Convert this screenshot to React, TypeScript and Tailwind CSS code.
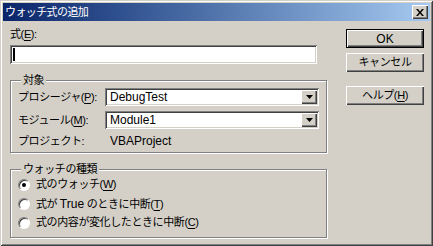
import React from "react";

const raised =
  "bg-[#d4d0c8] shadow-[inset_1px_1px_#fff,inset_-1px_-1px_#404040,inset_-2px_-2px_#808080]";
const sunken =
  "bg-white shadow-[inset_1px_1px_#808080,inset_-1px_-1px_#fff,inset_2px_2px_#404040,inset_-2px_-2px_#d4d0c8]";
const etched =
  "border border-[#808080] shadow-[inset_1px_1px_#fff,1px_1px_#fff]";

const Key = ({ k }: { k: string }) => (
  <>
    (<span className="underline underline-offset-2">{k}</span>)
  </>
);

const Latin = ({ children }: { children: React.ReactNode }) => (
  <span className="text-[12px] tracking-normal">{children}</span>
);

const Arrow = () => (
  <svg width="7" height="4" viewBox="0 0 7 4">
    <path d="M0 0h7L3.5 4z" fill="#000" />
  </svg>
);

const Combo = ({ value }: { value: string }) => (
  <div className={`${sunken} w-[214px] h-[18px] flex items-center pl-[5px] pr-[2px]`}>
    <span className="flex-1">
      <Latin>{value}</Latin>
    </span>
    <div className={`${raised} w-[16px] h-[14px] flex items-center justify-center`}>
      <Arrow />
    </div>
  </div>
);

const Radio = ({ checked, children }: { checked?: boolean; children: React.ReactNode }) => (
  <div className="h-[19px] flex items-center gap-[6px]">
    <div className="w-[12px] h-[12px] rounded-full bg-white border border-t-[#808080] border-l-[#808080] border-b-white border-r-white shadow-[inset_1px_1px_#404040] flex items-center justify-center">
      {checked && <div className="w-[4px] h-[4px] rounded-full bg-black" />}
    </div>
    <span className="whitespace-nowrap">{children}</span>
  </div>
);

const Button = ({ def, children }: { def?: boolean; children: React.ReactNode }) => (
  <div
    className={`w-[78px] h-[19px] flex items-center justify-center ${
      def
        ? "bg-[#d4d0c8] border border-black shadow-[inset_1px_1px_#fff,inset_-1px_-1px_#404040,inset_-2px_-2px_#808080]"
        : raised
    }`}
  >
    {children}
  </div>
);

export default function App() {
  return (
    <div className="w-[433px] h-[246px] bg-[#d4d0c8] p-[3px] shadow-[inset_1px_1px_#d4d0c8,inset_-1px_-1px_#404040,inset_2px_2px_#fff,inset_-2px_-2px_#808080] font-['Liberation_Sans','Noto_Sans_CJK_JP',sans-serif] text-[11px] tracking-[-0.4px] leading-none text-black">
      {/* title bar */}
      <div className="h-[18px] flex items-center justify-between bg-linear-to-r from-[#0a246a] to-[#a6caf0] pl-[2px] pr-[2px]">
        <span className="text-white text-[11px] tracking-[-0.6px]">ウォッチ式の追加</span>
        <div className={`${raised} w-[16px] h-[14px] flex items-center justify-center`}>
          <svg width="8" height="7" viewBox="0 0 8 7">
            <path d="M0 0h2l2 2.5L6 0h2L5 3.5 8 7H6L4 4.5 2 7H0l3-3.5z" fill="#000" />
          </svg>
        </div>
      </div>

      <div className="flex pl-[7px]">
        {/* left column */}
        <div className="w-[317px] pt-[8px]">
          <div>
            式<Key k="E" />:
          </div>
          <div className={`${sunken} mt-[5px] w-[307px] h-[19px] flex items-center pl-[3px]`}>
            <span className="w-[2px] h-[13px] bg-black" />
          </div>

          <fieldset className={`${etched} mt-[11px] h-[78px] px-[7px] pb-[4px]`}>
            <legend className="px-[2px] ml-[3px] bg-[#d4d0c8]">対象</legend>
            <div className="flex flex-col gap-[5px] pt-[2px]">
              <div className="flex items-center">
                <span className="w-[87px] whitespace-nowrap">
                  プロシージャ<Key k="P" />:
                </span>
                <Combo value="DebugTest" />
              </div>
              <div className="flex items-center">
                <span className="w-[87px] whitespace-nowrap">
                  モジュール<Key k="M" />:
                </span>
                <Combo value="Module1" />
              </div>
              <div className="flex items-center pt-[1px]">
                <span className="w-[92px] whitespace-nowrap">プロジェクト:</span>
                <Latin>VBAProject</Latin>
              </div>
            </div>
          </fieldset>

          <fieldset className={`${etched} mt-[11px] h-[74px] px-[7px]`}>
            <legend className="px-[2px] ml-[3px] bg-[#d4d0c8]">ウォッチの種類</legend>
            <div className="flex flex-col">
              <Radio checked>
                式のウォッチ<Key k="W" />
              </Radio>
              <Radio>
                式が <Latin>True</Latin> のときに中断<Key k="T" />
              </Radio>
              <Radio>
                式の内容が変化したときに中断<Key k="C" />
              </Radio>
            </div>
          </fieldset>
        </div>

        {/* right column */}
        <div className="ml-[19px] pt-[8px] flex flex-col">
          <Button def>
            <Latin>OK</Latin>
          </Button>
          <div className="mt-[5px]">
            <Button>キャンセル</Button>
          </div>
          <div className="mt-[14px]">
            <Button>
              ヘルプ<Key k="H" />
            </Button>
          </div>
        </div>
      </div>
    </div>
  );
}
